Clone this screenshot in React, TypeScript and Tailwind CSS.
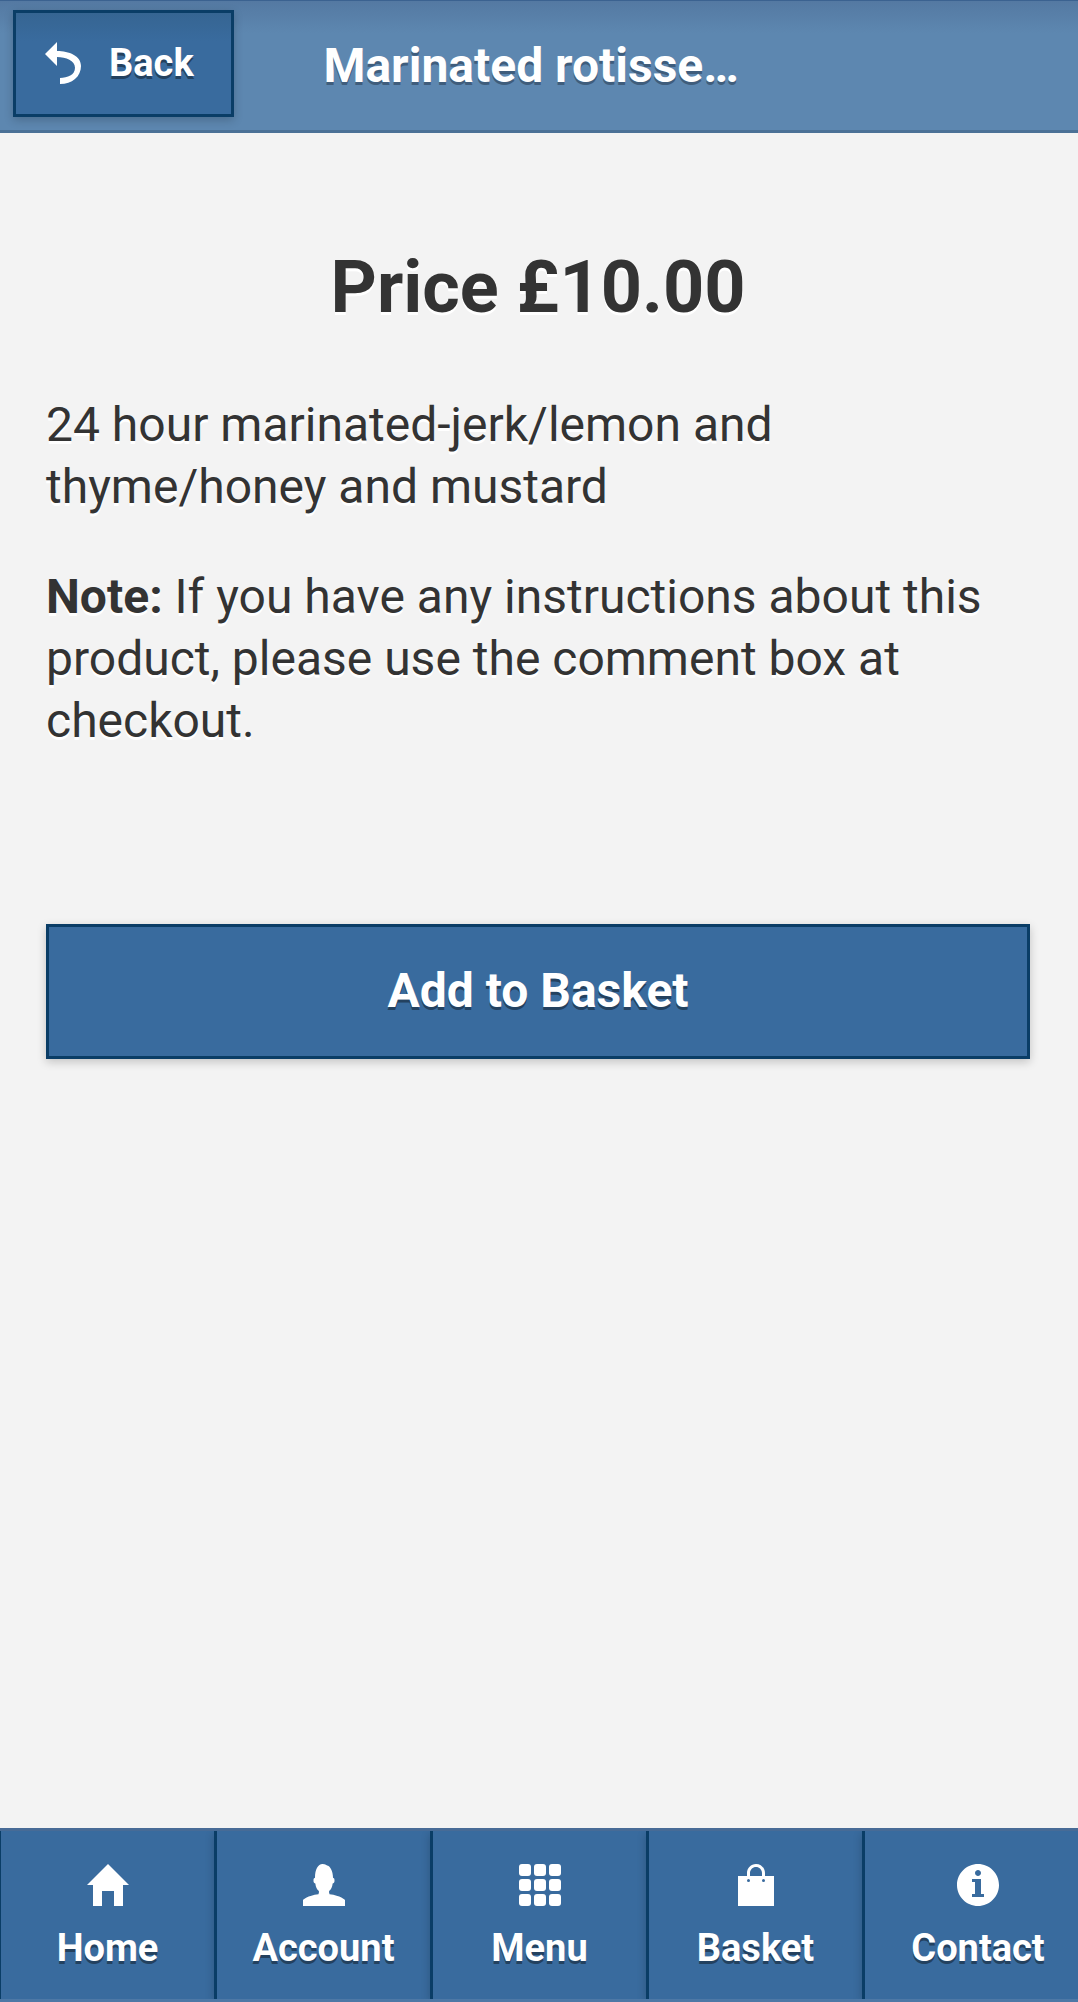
import type { ReactNode } from "react";

const BackIcon = () => (
  <svg viewBox="0 0 12 14" className="w-9 h-[42px] fill-white" aria-hidden="true">
    <path d="M4,3V0L0,4l4,4V5c3,0,6,1.2,6,3.6c0,2.4-2.5,3.4-5,3.4v2c4,0,7-2.4,7-6C12,4.6,8,3,4,3z" />
  </svg>
);

const NavIcon = ({ children }: { children: ReactNode }) => (
  <svg viewBox="0 0 14 14" className="size-[42px] fill-white" aria-hidden="true">
    {children}
  </svg>
);

const gridCells = [0, 5, 10];

const navItems = [
  {
    label: "Home",
    icon: <polygon points="7,0 0,7 2,7 2,14 5,14 5,9 9,9 9,14 12,14 12,7 14,7" />,
  },
  {
    label: "Account",
    icon: (
      <path d="M8.851,10.101c-0.18-0.399-0.2-0.763-0.153-1.104C9.383,8.49,9.738,7.621,9.891,6.465C10.493,6.355,10.5,5.967,10.5,5.5c0-0.437-0.008-0.804-0.502-0.94C9.999,4.539,10,4.521,10,4.5c0-2.103-1-4-2-4C8,0.5,7.5,0,6.5,0C5,0,4,1.877,4,4.5c0,0.021,0.001,0.039,0.002,0.06C3.508,4.696,3.5,5.063,3.5,5.5c0,0.467,0.007,0.855,0.609,0.965C4.262,7.621,4.617,8.49,5.303,8.997c0.047,0.341,0.026,0.704-0.153,1.104C1.503,10.503,0,12,0,12v2h14v-2C14,12,12.497,10.503,8.851,10.101z" />
    ),
  },
  {
    label: "Menu",
    icon: gridCells.map((y) =>
      gridCells.map((x) => (
        <rect key={`${x}-${y}`} x={x} y={y} width="4" height="4" rx="1" />
      ))
    ),
  },
  {
    label: "Basket",
    icon: (
      <path
        fillRule="evenodd"
        d="M10,4V3c0-1.657-1.343-3-3-3S4,1.343,4,3v1H1v10h12V4H10z M5,3c0-1.105,0.895-2,2-2s2,0.895,2,2v1H5V3z M4.5,6a0.5,0.5,0,1,1,0-1a0.5,0.5,0,1,1,0,1z M9.5,6a0.5,0.5,0,1,1,0-1a0.5,0.5,0,1,1,0,1z"
      />
    ),
  },
  {
    label: "Contact",
    icon: (
      <path
        fillRule="evenodd"
        d="M7,0C3.134,0,0,3.134,0,7s3.134,7,7,7s7-3.134,7-7S10.866,0,7,0z M7,2c0.552,0,1,0.447,1,1S7.552,4,7,4S6,3.553,6,3S6.448,2,7,2z M9,11H5v-1h1V6H5V5h3v5h1V11z"
      />
    ),
  },
];

const App = () => {
  return (
    <div className="min-h-screen flex flex-col bg-[#f3f3f3] text-[#333] text-5xl leading-[62px] font-['Roboto',sans-serif] [text-shadow:0_3px_0_#fff]">
      {/* Header */}
      <header className="flex items-start h-[133px] pt-[9px] border-t border-t-[#3b6290] border-b-3 border-b-[#4b7196] bg-[#5d87b0] bg-[linear-gradient(to_bottom,#5479a2,#5d87b0_32px)] text-white [text-shadow:0_3px_0_#3f5d7c]">
        <div className="w-[30%] shrink-0 pl-[13px]">
          <button
            type="button"
            className="flex items-center gap-7 w-[221px] h-[107px] pl-[29px] pb-0.5 border-3 border-[#0a3d66] bg-[#396b9e] bg-[linear-gradient(to_bottom,#366592,#396b9e_28px)] text-[38px] leading-12 font-bold shadow-[0_3px_9px_rgba(0,0,0,0.2)] [text-shadow:0_3px_0_#23415f] cursor-pointer"
          >
            <BackIcon />
            Back
          </button>
        </div>
        <h1 className="w-[40%] pt-[25px] font-bold truncate">Marinated rotisse…</h1>
      </header>

      {/* Product details */}
      <main className="grow px-[46px] pr-12 pt-[108px]">
        <h2 className="mb-[59px] text-7xl leading-[94px] font-bold text-center">
          Price £10.00
        </h2>
        <p className="mb-12">
          24 hour marinated-jerk/lemon and thyme/honey and mustard
        </p>
        <p>
          <strong className="font-bold">Note:</strong> If you have any
          instructions about this product, please use the comment box at
          checkout.
        </p>
        <button
          type="button"
          className="block w-full h-[135px] mt-[172px] pb-0.5 border-3 border-[#0a3d66] bg-[#396b9e] text-white font-bold shadow-[0_3px_9px_rgba(0,0,0,0.2)] [text-shadow:0_3px_0_#23415f] cursor-pointer"
        >
          Add to Basket
        </button>
      </main>

      {/* Bottom navigation */}
      <footer className="overflow-hidden border-t-3 border-t-[#476b96] border-b-3 border-b-[#4d78a6] bg-[#396b9e] text-white [text-shadow:0_3px_0_#23415f]">
        <nav className="-ml-0.5">
          <ul className="grid grid-cols-5">
            {navItems.map((item) => (
              <li key={item.label} className="group">
                <a
                  href="#"
                  className="flex flex-col items-center gap-[18px] pt-[33px] pb-[27px] border-l-3 border-[#0a3d66] bg-[#396b9e] text-[38px] leading-12 font-bold shadow-[0_3px_9px_rgba(0,0,0,0.2)] group-last:pl-[13px]"
                >
                  <NavIcon>{item.icon}</NavIcon>
                  {item.label}
                </a>
              </li>
            ))}
          </ul>
        </nav>
      </footer>
    </div>
  );
};

export default App;
